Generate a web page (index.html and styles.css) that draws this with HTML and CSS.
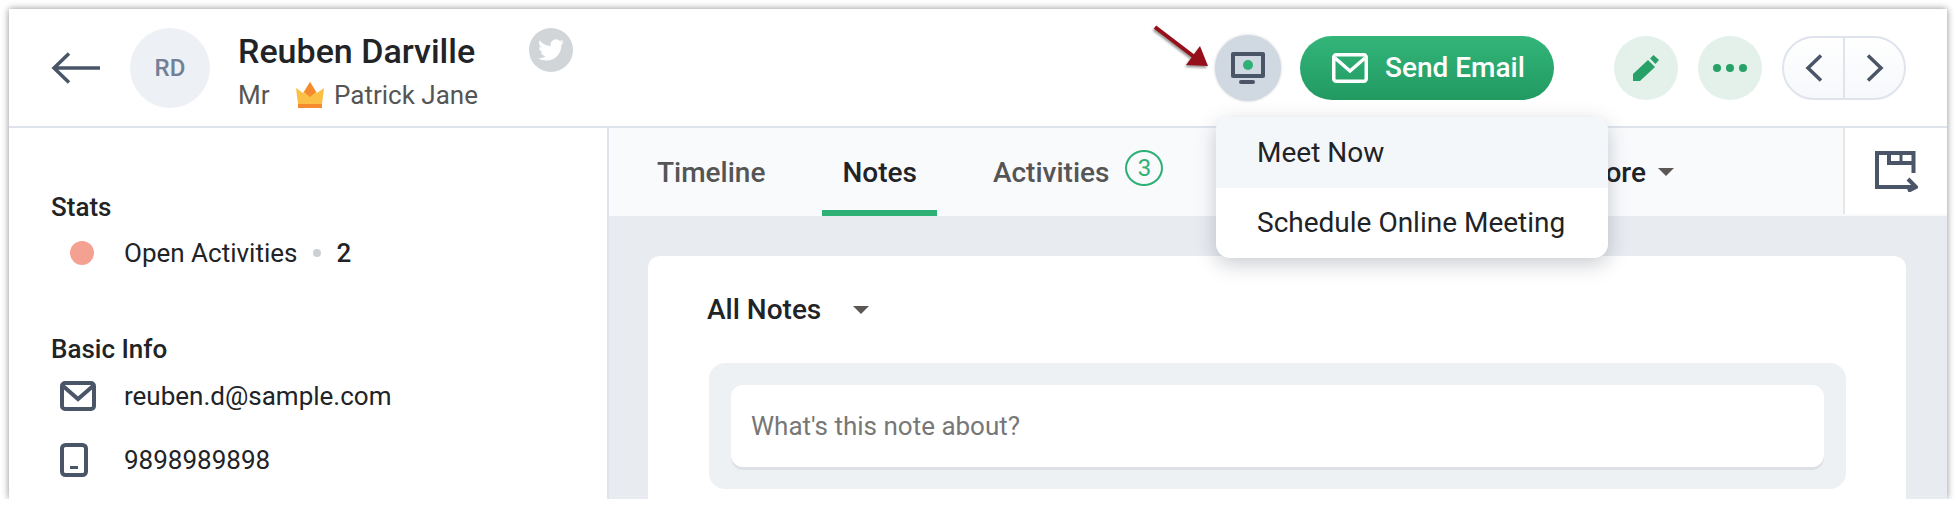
FILE: index.html
```html
<!DOCTYPE html>
<html lang="en">
<head>
    <meta charset="UTF-8">
    <meta name="viewport" content="width=device-width, initial-scale=1.0">
    <title>Reuben Darville</title>
    <link rel="stylesheet" href="styles.css">
</head>
<body>

<div class="frame">
    <div class="header">
        <svg class="back" width="49" height="32" viewBox="0 0 49 32"><path d="M49 16H4M18 1.500 3 16l15 14.500" fill="none" stroke="#4a5568" stroke-width="3.500"/></svg>
        <div class="avatar">RD</div>
        <div class="person">
            <div class="name">Reuben Darville</div>
            <div class="sub">
                <span class="title">Mr</span>
                <svg class="crown" width="28" height="26" viewBox="0 0 28 26"><path d="M0 6l7 5 7-11 7 11 7-5-2 16H2z" fill="#fbbf45"/><path d="M14 0l6 10-6 5-6-5z" fill="#f58a2e"/><path d="M2 22h24v4H2z" fill="#f58a2e"/></svg>
                <span>Patrick Jane</span>
            </div>
        </div>
        <div class="twitter">
            <svg width="26" height="26" viewBox="0 0 24 24"><path fill="#fff" d="M23.953 4.57a10 10 0 01-2.825.775 4.958 4.958 0 002.163-2.723c-.951.555-2.005.959-3.127 1.184a4.92 4.92 0 00-8.384 4.482C7.69 8.095 4.067 6.13 1.64 3.162a4.822 4.822 0 00-.666 2.475c0 1.71.87 3.213 2.188 4.096a4.904 4.904 0 01-2.228-.616v.06a4.923 4.923 0 003.946 4.827 4.996 4.996 0 01-2.212.085 4.936 4.936 0 004.604 3.417 9.867 9.867 0 01-6.102 2.105c-.39 0-.779-.023-1.17-.067a13.995 13.995 0 007.557 2.209c9.053 0 13.998-7.496 13.998-13.985 0-.21 0-.42-.015-.63A9.935 9.935 0 0024 4.59z"/></svg>
        </div>

        <div class="actions">
            <div class="meet-btn">
                <svg width="34" height="32" viewBox="0 0 34 32"><path d="M2 0h30a2 2 0 012 2v22a2 2 0 01-2 2H2a2 2 0 01-2-2V2a2 2 0 012-2z" fill="#4a5568"/><path d="M4 4h26v18H4z" fill="#d0d8e2"/><circle cx="17" cy="13" r="5" fill="#2fb077"/><rect x="8" y="28" width="16" height="4" rx="2" fill="#4a5568"/></svg>
            </div>
            <div class="send-btn">
                <svg width="36" height="30" viewBox="0 0 36 30"><rect x="1.750" y="1.750" width="32.500" height="26.500" rx="2.500" fill="none" stroke="#fff" stroke-width="3.500"/><path d="M3 5l15 13L33 5" fill="none" stroke="#fff" stroke-width="3.500"/></svg>
                Send Email
            </div>
            <div class="round-btn edit-btn">
                <svg width="26" height="26" viewBox="0 0 26 26"><path d="M0 26v-7L15 5l7 7L7 26z" fill="#27a168"/><path d="M17 3.500 20.500 0 26 5l-3.500 4z" fill="#27a168"/></svg>
            </div>
            <div class="round-btn more-btn">
                <span class="dot"></span><span class="dot"></span><span class="dot"></span>
            </div>
            <div class="pager">
                <div class="pager-item"><svg width="18" height="28" viewBox="0 0 18 28"><path d="M16 1.500 3 14l13 12.500" fill="none" stroke="#4a5568" stroke-width="3.500"/></svg></div>
                <div class="pager-item"><svg width="18" height="28" viewBox="0 0 18 28"><path d="M2 1.500 15 14 2 26.500" fill="none" stroke="#4a5568" stroke-width="3.500"/></svg></div>
            </div>
        </div>
    </div>

    <div class="columns">
        <div class="sidebar">
            <div class="side-title stats-title">Stats</div>
            <div class="side-row stat-row">
                <span class="side-icon"><span class="stat-dot"></span></span>
                <span>Open Activities</span>
                <span class="bullet"></span>
                <span class="count">2</span>
            </div>
            <div class="side-title info-title">Basic Info</div>
            <div class="side-row mail-row">
                <span class="side-icon">
                    <svg width="36" height="30" viewBox="0 0 36 30"><rect x="2" y="2" width="32" height="26" rx="3" fill="none" stroke="#4a5568" stroke-width="4"/><path d="M3 5l15 13L33 5" fill="none" stroke="#4a5568" stroke-width="4"/></svg>
                </span>
                <span>reuben.d@sample.com</span>
            </div>
            <div class="side-row phone-row">
                <span class="side-icon">
                    <svg width="28" height="34" viewBox="0 0 28 34"><rect x="2" y="2" width="24" height="30" rx="3.500" fill="none" stroke="#4a5568" stroke-width="4"/><rect x="10" y="23" width="8" height="3" fill="#4a5568"/></svg>
                </span>
                <span>9898989898</span>
            </div>
        </div>

        <div class="main">
            <div class="tabs">
                <div class="tab">Timeline</div>
                <div class="tab active">Notes</div>
                <div class="tab">Activities<span class="badge">3</span></div>
                <div class="tab more-tab">More<span class="caret"></span></div>
                <div class="export">
                    <svg width="43" height="41" viewBox="0 0 43 41"><path d="M38.500 22V2H2v34h37" fill="none" stroke="#4a5568" stroke-width="4"/><path d="M14 2v10h24" fill="none" stroke="#4a5568" stroke-width="4"/><path d="M26 2v8" fill="none" stroke="#4a5568" stroke-width="3"/><path d="M33 28l8 8-8 4" fill="none" stroke="#4a5568" stroke-width="4"/></svg>
                </div>
            </div>
            <div class="content">
                <div class="card">
                    <div class="filter">All Notes<span class="caret"></span></div>
                    <div class="note-box">
                        <div class="note-input">What's this note about?</div>
                    </div>
                </div>
            </div>
        </div>
    </div>

    <!-- meeting menu, open over the tabs -->
    <div class="menu">
        <div class="menu-item hover">Meet Now</div>
        <div class="menu-item">Schedule Online Meeting</div>
    </div>

    <svg class="pointer" width="60" height="46" viewBox="0 0 60 46"><path d="M1 2 43 34" stroke="#95101a" stroke-width="4" fill="none"/><path d="M54 41 32 40 46 21z" fill="#95101a"/></svg>
</div>

</body>
</html>
```

FILE: styles.css
```css
* {
    box-sizing: border-box;
}
body {
    margin: 0;
    background-color: #fff;
    font-family: Roboto, Arial, sans-serif;
    color: #212326;
}
.frame {
    position: relative;
    width: 1938px;
    height: 490px;
    margin: 9px 0 0 9px;
    background-color: #fff;
    box-shadow: 0 0 7px rgba(0, 0, 0, 0.45);
    overflow: hidden;
}

/* header */
.header {
    display: flex;
    align-items: center;
    height: 119px;
    padding: 0 41px 0 42px;
    border-bottom: 2px solid #dfe4ec;
}
.back {
    flex: none;
}
.avatar {
    display: flex;
    align-items: center;
    justify-content: center;
    flex: none;
    width: 80px;
    height: 80px;
    margin-left: 30px;
    border-radius: 50%;
    background-color: #edf1f6;
    color: #718096;
    font-size: 24px;
    font-weight: 500;
}
.person {
    margin-left: 28px;
    padding-top: 7px;
}
.name {
    font-size: 34px;
    font-weight: 500;
    line-height: 40px;
}
.sub {
    display: flex;
    align-items: center;
    margin-top: 8px;
    font-size: 26px;
    line-height: 32px;
    color: #555;
}
.title {
    width: 58px;
}
.crown {
    margin-right: 10px;
}
.twitter {
    display: flex;
    align-items: center;
    justify-content: center;
    width: 44px;
    height: 44px;
    margin: 0 0 36px 51px;
    border-radius: 50%;
    background-color: #d1d5d8;
}
.actions {
    display: flex;
    align-items: center;
    margin-left: auto;
}
.meet-btn {
    display: flex;
    align-items: center;
    justify-content: center;
    width: 66px;
    height: 66px;
    margin-right: 19px;
    border-radius: 50%;
    background-color: #d0d8e2;
    box-shadow: 0 0 3px rgba(0, 0, 0, 0.2);
}
.send-btn {
    display: flex;
    align-items: center;
    gap: 17px;
    width: 254px;
    height: 64px;
    margin-right: 60px;
    padding-left: 32px;
    border-radius: 32px;
    background: linear-gradient(#33b57a, #219a62);
    color: #fff;
    font-size: 28px;
    font-weight: 500;
}
.round-btn {
    display: flex;
    align-items: center;
    justify-content: center;
    width: 64px;
    height: 64px;
    margin-right: 20px;
    border-radius: 50%;
    background-color: #e3f1ea;
}
.more-btn {
    gap: 5px;
}
.dot {
    width: 8px;
    height: 8px;
    border-radius: 50%;
    background-color: #27a168;
}
.pager {
    display: flex;
    width: 124px;
    height: 64px;
    border: 2px solid #dfe4ec;
    border-radius: 32px;
    background: linear-gradient(#fff, #f6f8fb);
}
.pager-item {
    display: flex;
    flex: 1;
    align-items: center;
    justify-content: center;
}
.pager-item + .pager-item {
    border-left: 2px solid #dfe4ec;
}

/* left column */
.columns {
    display: flex;
    height: 371px;
}
.sidebar {
    flex: none;
    width: 600px;
    padding-left: 42px;
    border-right: 2px solid #dfe4ec;
    font-size: 26px;
}
.side-title {
    font-weight: 500;
    line-height: 30px;
}
.stats-title {
    margin-top: 64px;
}
.info-title {
    margin-top: 66px;
}
.side-row {
    display: flex;
    align-items: center;
    line-height: 30px;
}
.side-icon {
    display: flex;
    align-items: center;
    width: 73px;
    padding-left: 9px;
}
.stat-row {
    margin-top: 16px;
}
.stat-dot {
    width: 24px;
    height: 24px;
    margin-left: 10px;
    border-radius: 50%;
    background-color: #f5a192;
}
.bullet {
    width: 8px;
    height: 8px;
    margin: 0 15px 0 16px;
    border-radius: 50%;
    background-color: #ccd0d5;
}
.count {
    font-weight: 500;
}
.mail-row {
    margin-top: 17px;
}
.phone-row {
    margin-top: 32px;
}

/* tabs and notes */
.main {
    display: flex;
    flex: 1;
    flex-direction: column;
    min-width: 0;
}
.tabs {
    display: flex;
    flex: none;
    height: 88px;
    padding-left: 28px;
    background-color: #f9fafc;
    font-size: 28px;
    color: #555;
}
.tab {
    display: flex;
    align-items: center;
    height: 88px;
    margin-right: 36px;
    padding: 6px 20px 0;
    border-bottom: 6px solid transparent;
    font-weight: 500;
}
.tab.active {
    margin-left: 1px;
    border-bottom-color: #2fb077;
    color: #212326;
}
.badge {
    display: flex;
    align-items: center;
    justify-content: center;
    width: 38px;
    height: 36px;
    margin: -8px 0 0 16px;
    border: 2px solid #2fb077;
    border-radius: 50%;
    color: #2fb077;
    font-size: 24px;
    font-weight: 400;
}
.more-tab {
    margin-left: auto;
    margin-right: 0;
    padding-right: 0;
    color: #212326;
}
.caret {
    width: 0;
    height: 0;
    border-top: 8px solid #5c5654;
    border-left: 8px solid transparent;
    border-right: 8px solid transparent;
}
.more-tab .caret {
    margin-left: 12px;
}
.export {
    display: flex;
    align-items: center;
    justify-content: flex-start;
    flex: none;
    width: 104px;
    height: 86px;
    margin-left: 169px;
    padding-left: 30px;
    border-left: 2px solid #e6e8e8;
    background-color: #fff;
}
.content {
    flex: 1;
    padding: 40px 41px 0 39px;
    background-color: #e8ebf0;
}
.card {
    height: 243px;
    padding: 0 60px 0 61px;
    border-radius: 12px 12px 0 0;
    background-color: #fff;
}
.filter {
    display: flex;
    align-items: center;
    height: 107px;
    margin-left: -2px;
    font-size: 28px;
    font-weight: 500;
}
.filter .caret {
    margin-left: 32px;
}
.note-box {
    height: 126px;
    padding: 22px 22px 20px;
    border-radius: 16px;
    background-color: #eef1f4;
}
.note-input {
    display: flex;
    align-items: center;
    height: 82px;
    padding-left: 20px;
    border-radius: 12px;
    background-color: #fff;
    box-shadow: 0 3px 0 #dde1e6;
    font-size: 26px;
    color: #777;
}

/* things lying over the page */
.menu {
    position: absolute;
    top: 108px;
    left: 1207px;
    width: 392px;
    overflow: hidden;
    border-radius: 14px;
    background-color: #fff;
    box-shadow: 0 6px 20px rgba(40, 50, 70, 0.25);
}
.menu-item {
    display: flex;
    align-items: center;
    height: 70px;
    padding: 0 0 2px 41px;
    font-size: 28px;
}
.menu-item.hover {
    height: 71px;
    padding-bottom: 0;
    background-color: #f4f7fa;
}
.pointer {
    position: absolute;
    top: 16px;
    left: 1145px;
    filter: drop-shadow(-1px 2px 1px rgba(0, 0, 0, 0.4));
}
```
